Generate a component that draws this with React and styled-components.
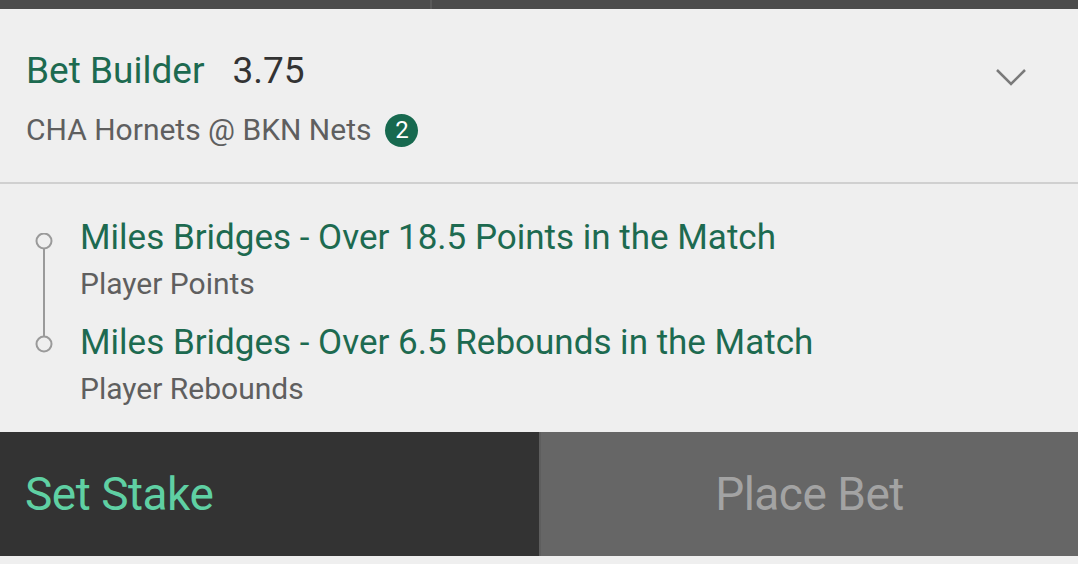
import React from 'react';
import styled, { createGlobalStyle } from 'styled-components';

const Global = createGlobalStyle`
  html, body {
    margin: 0;
    padding: 0;
    background: #efefef;
  }
  body {
    font-family: Roboto, "Noto Sans", sans-serif;
    -webkit-font-smoothing: antialiased;
  }
`;

const Page = styled.div`
  width: 1078px;
  height: 564px;
  display: flex;
  flex-direction: column;
  background: #efefef;
  overflow: hidden;
`;

const TopBar = styled.div`
  height: 9px;
  display: flex;
  background: #4b4b4b;
  div:first-child {
    width: 430px;
    border-right: 2px solid #5a5a5a;
  }
`;

const Header = styled.div`
  display: flex;
  justify-content: space-between;
  padding: 40px 26px 0 26px;
  height: 133px;
  border-bottom: 2px solid #d0d0d0;
`;

const TitleRow = styled.div`
  display: flex;
  align-items: baseline;
  gap: 28px;
  line-height: 44px;
`;

const Title = styled.span`
  font-size: 37px;
  color: #1d6a50;
`;

const Odds = styled.span`
  font-size: 37px;
  color: #333;
`;

const Match = styled.div`
  margin-top: 19px;
  display: flex;
  align-items: center;
  gap: 14px;
  font-size: 30px;
  line-height: 36px;
  color: #5f5f5f;
`;

const Badge = styled.span`
  width: 33px;
  height: 33px;
  border-radius: 50%;
  background: #17694f;
  color: #fff;
  font-size: 24px;
  display: inline-flex;
  align-items: center;
  justify-content: center;
`;

const Chevron = styled.div`
  padding: 17px 24px 0 0;
`;

const Legs = styled.div`
  flex: 1;
  display: flex;
  padding: 31px 0 0 34px;
`;

const Rail = styled.div`
  width: 20px;
  padding-top: 18px;
`;

const LegList = styled.div`
  margin-left: 26px;
  display: flex;
  flex-direction: column;
  gap: 13px;
`;

const Leg = styled.div`
  display: flex;
  flex-direction: column;
`;

const LegTitle = styled.span`
  font-size: 35px;
  line-height: 46px;
  color: #1d6a50;
`;

const LegMarket = styled.span`
  font-size: 30px;
  line-height: 46px;
  color: #5f5f5f;
`;

const Footer = styled.div`
  height: 124px;
  display: flex;
  margin-bottom: 8px;
`;

const ActionButton = styled.div`
  display: flex;
  align-items: center;
  ${(p) => (p.$primary ? 'width: 514px;' : 'flex: 1;')}
  justify-content: ${(p) => (p.$primary ? 'flex-start' : 'center')};
  padding-left: ${(p) => (p.$primary ? '25px' : '0')};
  background: ${(p) => (p.$primary ? '#333333' : '#666666')};
  color: ${(p) => (p.$primary ? '#5fd0a3' : '#a3a3a3')};
  font-size: 46px;
  letter-spacing: -0.5px;
  & + & {
    border-left: 2px solid #5e5e5e;
  }
`;

const legs = [
  { title: 'Miles Bridges - Over 18.5 Points in the Match', market: 'Player Points' },
  { title: 'Miles Bridges - Over 6.5 Rebounds in the Match', market: 'Player Rebounds' },
];

export default function App() {
  return (
    <Page>
      <Global />
      <TopBar>
        <div />
        <div />
      </TopBar>
      <Header>
        <div>
          <TitleRow>
            <Title>Bet Builder</Title>
            <Odds>3.75</Odds>
          </TitleRow>
          <Match>
            CHA Hornets @ BKN Nets <Badge>2</Badge>
          </Match>
        </div>
        <Chevron>
          <svg width="34" height="22" viewBox="0 0 34 22">
            <path d="M3 4 L17 18 L31 4" fill="none" stroke="#7a7a7a" strokeWidth="2.5" />
          </svg>
        </Chevron>
      </Header>
      <Legs>
        <Rail>
          <svg width="20" height="124" viewBox="0 0 20 124">
            <line x1="10" y1="16" x2="10" y2="103" stroke="#9a9a9a" strokeWidth="2" />
            <circle cx="10" cy="8" r="7.5" fill="#efefef" stroke="#9a9a9a" strokeWidth="2" />
            <circle cx="10" cy="111" r="7.5" fill="#efefef" stroke="#9a9a9a" strokeWidth="2" />
          </svg>
        </Rail>
        <LegList>
          {legs.map((l) => (
            <Leg key={l.title}>
              <LegTitle>{l.title}</LegTitle>
              <LegMarket>{l.market}</LegMarket>
            </Leg>
          ))}
        </LegList>
      </Legs>
      <Footer>
        <ActionButton $primary>Set Stake</ActionButton>
        <ActionButton>Place Bet</ActionButton>
      </Footer>
    </Page>
  );
}
